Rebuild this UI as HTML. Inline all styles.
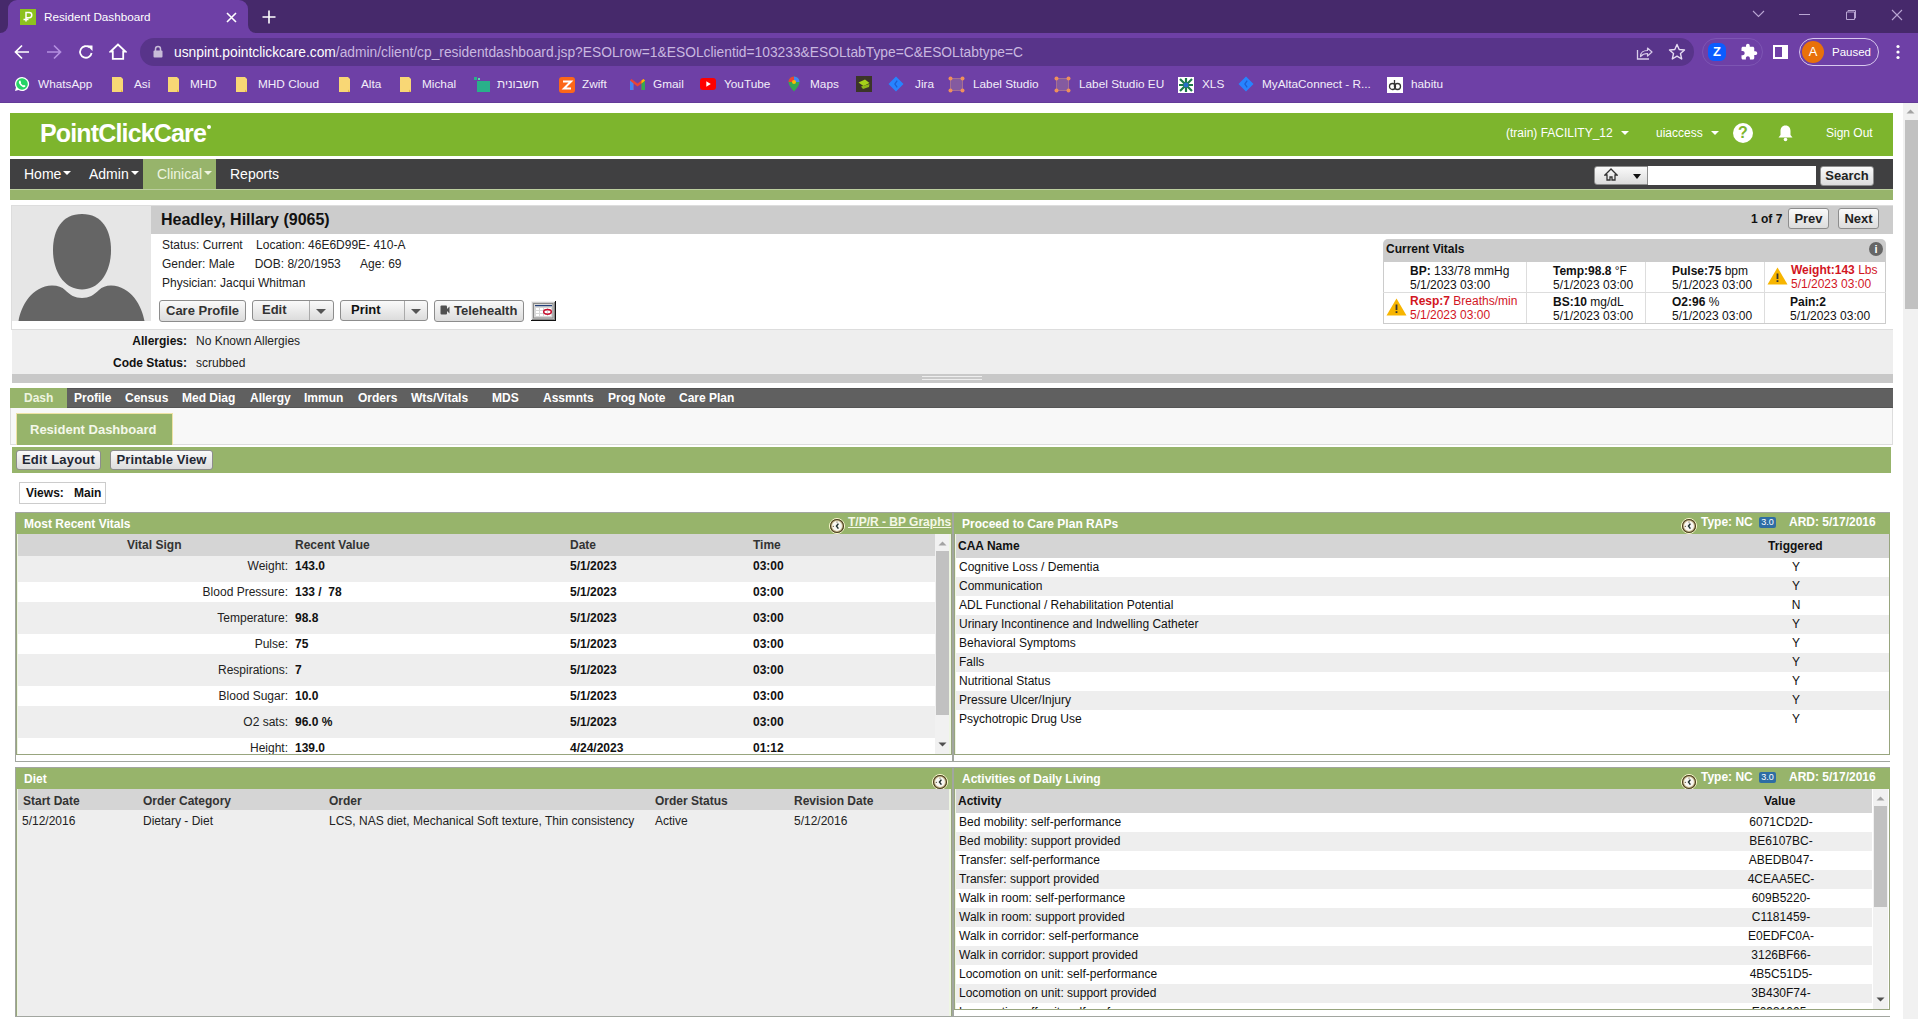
<!DOCTYPE html>
<html><head><meta charset="utf-8">
<style>
*{box-sizing:border-box;margin:0;padding:0}
html,body{width:1918px;height:1019px;overflow:hidden;background:#fff;font-family:"Liberation Sans",sans-serif;font-size:12px;color:#222}
.a{position:absolute}
.nw{white-space:nowrap}
/* chrome */
#tabstrip{left:0;top:0;width:1918px;height:34px;background:#46296b}
#tab{left:8px;top:0;width:240px;height:34px;background:#6e40a6;border-radius:9px 9px 0 0}
#toolbar{left:0;top:33px;width:1918px;height:70px;background:#6e40a6;border-bottom:1px solid #633b98}
.bm{font-size:11.8px;color:#f3eefa;top:77px;line-height:14px}
.url{left:140px;top:38px;width:1554px;height:28px;border-radius:14px;background:#58348a}
/* pcc */
#hdr{left:10px;top:113px;width:1883px;height:43px;background:#7db52d}
#nav{left:10px;top:159px;width:1883px;height:30px;background:#404041}
#strip{left:10px;top:189px;width:1883px;height:11px;background:#97b46b}
.navi{top:166px;font-size:14px;color:#fff;line-height:16px}
.caret{display:inline-block;width:0;height:0;border-left:4px solid transparent;border-right:4px solid transparent;border-top:4px solid #fff;vertical-align:middle;margin-left:2px;position:relative;top:-2px}
.btn{background:linear-gradient(#fafafa,#dcdcdc);border:1px solid #8d8d8d;border-radius:3px;color:#222;font-weight:bold;font-size:13px;line-height:18px;text-align:center}
.tabt{top:391px;font-size:12px;font-weight:bold;color:#fff;line-height:15px}
.ph{background:#97b46b}
.pht{font-weight:bold;color:#fff;font-size:12px;line-height:14px}
.th{background:#d5d5d5;font-weight:bold;color:#333}
.g{background:#eee}
.t12{font-size:12px;line-height:14px}
.b{font-weight:bold}
.red{color:#d8262e}
</style></head><body>
<!-- ============ CHROME ============ -->
<div id="tabstrip" class="a"></div>
<div id="tab" class="a"></div><div class="a" style="left:0;top:24px;width:8px;height:10px;background:#6e40a6"></div><div class="a" style="left:-10px;top:0;width:18px;height:33px;background:#46296b;border-radius:0 0 8px 0"></div><div class="a" style="left:248px;top:24px;width:8px;height:10px;background:#6e40a6"></div><div class="a" style="left:248px;top:0;width:18px;height:33px;background:#46296b;border-radius:0 0 0 8px"></div>
<div id="toolbar" class="a"></div>

<div class="a" style="left:20px;top:9px;width:16px;height:16px;background:#8dc21f"></div>
<svg class="a" style="left:20px;top:9px" width="16" height="16" viewBox="0 0 16 16"><path d="M6 12.5V3.5h3.2a2.6 2.6 0 0 1 0 5.2H6M3.5 10.5h5" stroke="#fff" stroke-width="1.5" fill="none"/></svg>
<div class="a nw" style="left:44px;top:9px;font-size:11.7px;color:#fff;line-height:16px">Resident Dashboard</div>
<svg class="a" style="left:226px;top:12px" width="11" height="11" viewBox="0 0 11 11"><path d="M1 1L10 10M10 1L1 10" stroke="#fff" stroke-width="1.6"/></svg>
<svg class="a" style="left:262px;top:10px" width="14" height="14" viewBox="0 0 14 14"><path d="M7 0.5V13.5M0.5 7H13.5" stroke="#fff" stroke-width="1.6"/></svg>
<!-- window controls -->
<svg class="a" style="left:1752px;top:10px" width="13" height="8" viewBox="0 0 13 8"><path d="M1 1L6.5 6.5L12 1" stroke="#b9a6d3" stroke-width="1.1" fill="none"/></svg>
<div class="a" style="left:1799px;top:14px;width:11px;height:1px;background:#b9a6d3"></div>
<svg class="a" style="left:1845px;top:9px" width="12" height="12" viewBox="0 0 12 12"><path d="M3 2.5V1.5h7.5V9H9.5M1.5 3h8v7.5h-8z" stroke="#b9a6d3" stroke-width="1" fill="none"/></svg>
<svg class="a" style="left:1891px;top:9px" width="12" height="12" viewBox="0 0 12 12"><path d="M1 1L11 11M11 1L1 11" stroke="#b9a6d3" stroke-width="1.1"/></svg>
<!-- toolbar -->
<svg class="a" style="left:14px;top:44px" width="16" height="16" viewBox="0 0 16 16"><path d="M15 8H2M8 1.5L1.5 8L8 14.5" stroke="#fff" stroke-width="1.7" fill="none"/></svg>
<svg class="a" style="left:46px;top:44px" width="16" height="16" viewBox="0 0 16 16"><path d="M1 8H14M8 1.5L14.5 8L8 14.5" stroke="#b48fe0" stroke-width="1.7" fill="none"/></svg>
<svg class="a" style="left:78px;top:44px" width="16" height="16" viewBox="0 0 16 16"><path d="M13.6 9A5.8 5.8 0 1 1 11.5 3.4" stroke="#fff" stroke-width="1.8" fill="none"/><path d="M9 1.5H14.5V7z" fill="#fff"/></svg>
<svg class="a" style="left:109px;top:43px" width="18" height="17" viewBox="0 0 18 17"><path d="M9 1.5L1.5 8.5H3.8V15.8H14.2V8.5H16.5Z" stroke="#fff" stroke-width="1.8" fill="none" stroke-linejoin="miter"/></svg>
<div class="a url"></div>
<svg class="a" style="left:153px;top:45px" width="10" height="13" viewBox="0 0 10 13"><path d="M2.5 6V4a2.5 2.5 0 0 1 5 0v2" stroke="#c8bcd8" stroke-width="1.5" fill="none"/><rect x="0.5" y="5.5" width="9" height="7" rx="1" fill="#c8bcd8"/></svg>
<div class="a nw" style="left:174px;top:45px;font-size:13.8px;line-height:16px;color:#fff">usnpint.pointclickcare.com<span style="color:#c9b8e0">/admin/client/cp_residentdashboard.jsp?ESOLrow=1&amp;ESOLclientid=103233&amp;ESOLtabType=C&amp;ESOLtabtype=C</span></div>
<svg class="a" style="left:1636px;top:44px" width="18" height="16" viewBox="0 0 18 16"><path d="M1.5 6V15H13" stroke="#d9cdea" stroke-width="1.3" fill="none"/><path d="M4.5 12.5C4.5 8.5 7.5 6.5 11.5 6.5V4L16 8L11.5 12V9.5C8.5 9.5 6.2 10.5 4.5 12.5Z" stroke="#d9cdea" stroke-width="1.2" fill="none" stroke-linejoin="round"/></svg>
<svg class="a" style="left:1668px;top:43px" width="18" height="18" viewBox="0 0 18 18"><path d="M9 1.5L11.2 6.5L16.5 7L12.5 10.6L13.7 16L9 13.2L4.3 16L5.5 10.6L1.5 7L6.8 6.5Z" stroke="#e6dcf2" stroke-width="1.4" fill="none" stroke-linejoin="round"/></svg>
<div class="a" style="left:1702px;top:38px;width:61px;height:28px;border-radius:14px;border:1px solid #7d55b3"></div>
<div class="a" style="left:1708px;top:43px;width:18px;height:18px;border-radius:6px;background:#0b5cff;color:#fff;font-weight:bold;font-size:13px;line-height:18px;text-align:center">Z</div>
<svg class="a" style="left:1740px;top:43px" width="18" height="18" viewBox="0 0 18 18"><path transform="scale(0.75)" d="M20.5 11H19V7c0-1.1-.9-2-2-2h-4V3.5C13 2.12 11.88 1 10.5 1S8 2.12 8 3.5V5H4c-1.1 0-1.99.9-1.99 2v3.8H3.5c1.49 0 2.7 1.21 2.7 2.7s-1.21 2.7-2.7 2.7H2V20c0 1.1.9 2 2 2h3.8v-1.5c0-1.49 1.21-2.7 2.7-2.7 1.49 0 2.7 1.21 2.7 2.7V22H17c1.1 0 2-.9 2-2v-4h1.5c1.38 0 2.5-1.12 2.5-2.5S21.880 11 20.5 11z" fill="#fff"/></svg>
<div class="a" style="left:1773px;top:45px;width:15px;height:14px;border:2px solid #fff;border-right-width:6px"></div>
<div class="a" style="left:1799px;top:38px;width:80px;height:28px;border-radius:14px;border:1px solid #d8c8ee"></div>
<div class="a" style="left:1802px;top:41px;width:22px;height:22px;border-radius:11px;background:#e8710a;color:#fff;font-size:13px;line-height:22px;text-align:center">A</div>
<div class="a nw" style="left:1832px;top:45px;font-size:11.5px;line-height:14px;color:#fff">Paused</div>
<svg class="a" style="left:1895px;top:44px" width="6" height="16" viewBox="0 0 6 16"><circle cx="3" cy="2.5" r="1.6" fill="#fff"/><circle cx="3" cy="8" r="1.6" fill="#fff"/><circle cx="3" cy="13.5" r="1.6" fill="#fff"/></svg>
<!-- bookmarks -->
<svg class="a" style="left:14px;top:76px" width="16" height="16" viewBox="0 0 16 16"><path d="M8 1a7 7 0 0 0-6 10.6L1 15l3.5-1A7 7 0 1 0 8 1z" fill="#fff"/><circle cx="8" cy="8" r="5.8" fill="#25d366"/><path d="M5.5 4.8c.4-.3.8-.3 1 .1l.6 1.3c.1.3-.2.6-.4.9.5 1 1.3 1.8 2.3 2.3.3-.2.6-.5.9-.4l1.3.6c.4.2.4.6.1 1-.7.8-1.8.8-3 .1-1.2-.7-2.3-1.8-3-3-.6-1.2-.6-2.2.2-2.9z" fill="#fff"/></svg>
<div class="a nw bm" style="left:38px">WhatsApp</div>
<svg class="a" style="left:112px;top:77px" width="12" height="15" viewBox="0 0 12 15"><path d="M0 0H9L11 2V15H0Z" fill="#f8d775"/><path d="M9 12.5L11 15H9z" fill="#e0b440"/></svg><div class="a nw bm" style="left:134px">Asi</div>
<svg class="a" style="left:168px;top:77px" width="12" height="15" viewBox="0 0 12 15"><path d="M0 0H9L11 2V15H0Z" fill="#f8d775"/><path d="M9 12.5L11 15H9z" fill="#e0b440"/></svg><div class="a nw bm" style="left:190px">MHD</div>
<svg class="a" style="left:236px;top:77px" width="12" height="15" viewBox="0 0 12 15"><path d="M0 0H9L11 2V15H0Z" fill="#f8d775"/><path d="M9 12.5L11 15H9z" fill="#e0b440"/></svg><div class="a nw bm" style="left:258px">MHD Cloud</div>
<svg class="a" style="left:339px;top:77px" width="12" height="15" viewBox="0 0 12 15"><path d="M0 0H9L11 2V15H0Z" fill="#f8d775"/><path d="M9 12.5L11 15H9z" fill="#e0b440"/></svg><div class="a nw bm" style="left:361px">Alta</div>
<svg class="a" style="left:400px;top:77px" width="12" height="15" viewBox="0 0 12 15"><path d="M0 0H9L11 2V15H0Z" fill="#f8d775"/><path d="M9 12.5L11 15H9z" fill="#e0b440"/></svg><div class="a nw bm" style="left:422px">Michal</div>

<div class="a" style="left:474px;top:77px;width:16px;height:15px"><div class="a" style="left:3px;top:4px;width:13px;height:11px;background:#29b08a"></div><div class="a" style="left:0;top:0;width:3px;height:3px;background:#29b08a"></div><div class="a" style="left:4px;top:1px;width:2px;height:2px;background:#5fd5b0"></div></div>
<div class="a nw bm" style="left:497px">חשבונית</div>
<div class="a" style="left:559px;top:77px;width:16px;height:16px;border-radius:3px;background:#fc6719"></div>
<svg class="a" style="left:559px;top:77px" width="16" height="16" viewBox="0 0 16 16"><path d="M4 4.5H12L5 11.5H12" stroke="#fff" stroke-width="2" fill="none"/></svg>
<div class="a nw bm" style="left:582px">Zwift</div>
<svg class="a" style="left:630px;top:79px" width="15" height="11" viewBox="0 0 15 11"><path d="M0 1.5V11H3.5V4.5L7.5 7.5L11.5 4.5V11H15V1.5L13.5 0L7.5 4.5L1.5 0Z" fill="#ea4335"/><path d="M0 1.5V11H3.5V4.5Z" fill="#4285f4"/><path d="M15 1.5V11H11.5V4.5Z" fill="#34a853"/><path d="M11.5 4.5L15 1.5L13.5 0L11.5 1.5Z" fill="#fbbc04"/></svg>
<div class="a nw bm" style="left:653px">Gmail</div>
<div class="a" style="left:700px;top:78px;width:16px;height:12px;border-radius:3px;background:#f00"></div>
<svg class="a" style="left:700px;top:78px" width="16" height="12" viewBox="0 0 16 12"><path d="M6.3 3.3V8.7L10.8 6Z" fill="#fff"/></svg>
<div class="a nw bm" style="left:724px">YouTube</div>
<svg class="a" style="left:788px;top:76px" width="12" height="16" viewBox="0 0 12 16"><path d="M6 0.5A5.5 5.5 0 0 0 0.5 6C0.5 10 6 15.5 6 15.5S11.5 10 11.5 6A5.5 5.5 0 0 0 6 0.5Z" fill="#34a853"/><path d="M6 0.5A5.5 5.5 0 0 1 11.5 6L6 6Z" fill="#4285f4"/><path d="M0.5 6A5.5 5.5 0 0 1 6 0.5L6 6Z" fill="#ea4335"/><circle cx="6" cy="6" r="2" fill="#fbbc04"/></svg>
<div class="a nw bm" style="left:810px">Maps</div>
<div class="a" style="left:856px;top:76px;width:16px;height:16px;background:#3b3528"></div>
<svg class="a" style="left:856px;top:76px" width="16" height="16" viewBox="0 0 16 16"><path d="M2.5 6.5L9 3.5L13.5 7L7.5 10Z" fill="#a6d21a"/><path d="M5 10.5L13.5 8L13 11L7 13Z" fill="#8fb818"/></svg>
<svg class="a" style="left:888px;top:76px" width="16" height="16" viewBox="0 0 16 16"><path d="M8 0.5L15.5 8L8 15.5L0.5 8Z" fill="#2684ff"/><path d="M9.2 4.6L6.9 8L9.2 11.4" stroke="#1d5fd0" stroke-width="1.3" fill="none"/></svg>
<div class="a nw bm" style="left:915px">Jira</div>
<svg class="a" style="left:948px;top:76px" width="17" height="17" viewBox="0 0 17 17"><rect x="2.5" y="2.5" width="12" height="12" fill="#845aa0" stroke="#b07890" stroke-width="0.8"/><circle cx="2.5" cy="2.5" r="2" fill="#f0905a"/><circle cx="14.5" cy="2.5" r="2" fill="#f0905a"/><circle cx="2.5" cy="14.5" r="2" fill="#f0905a"/><circle cx="14.5" cy="14.5" r="2" fill="#f0905a"/></svg>
<div class="a nw bm" style="left:973px">Label Studio</div>
<svg class="a" style="left:1054px;top:76px" width="17" height="17" viewBox="0 0 17 17"><rect x="2.5" y="2.5" width="12" height="12" fill="#845aa0" stroke="#b07890" stroke-width="0.8"/><circle cx="2.5" cy="2.5" r="2" fill="#f0905a"/><circle cx="14.5" cy="2.5" r="2" fill="#f0905a"/><circle cx="2.5" cy="14.5" r="2" fill="#f0905a"/><circle cx="14.5" cy="14.5" r="2" fill="#f0905a"/></svg>
<div class="a nw bm" style="left:1079px">Label Studio EU</div>
<div class="a" style="left:1178px;top:77px;width:16px;height:16px;background:#fff"></div>
<svg class="a" style="left:1178px;top:77px" width="16" height="16" viewBox="0 0 16 16"><path d="M2 2L14 14M14 2L2 14M8 1V15M1 8H15" stroke="#1d7a4a" stroke-width="2.2"/><circle cx="8" cy="8" r="2.5" fill="#2a6fc9"/></svg>
<div class="a nw bm" style="left:1202px">XLS</div>
<svg class="a" style="left:1238px;top:76px" width="16" height="16" viewBox="0 0 16 16"><path d="M8 0.5L15.5 8L8 15.5L0.5 8Z" fill="#2684ff"/><path d="M9.2 4.6L6.9 8L9.2 11.4" stroke="#1d5fd0" stroke-width="1.3" fill="none"/></svg>
<div class="a nw bm" style="left:1262px">MyAltaConnect - R...</div>
<div class="a" style="left:1387px;top:77px;width:16px;height:16px;background:#fff"></div>
<svg class="a" style="left:1387px;top:77px" width="16" height="16" viewBox="0 0 16 16"><circle cx="5.5" cy="9.5" r="3" stroke="#333" stroke-width="1.3" fill="none"/><circle cx="10.5" cy="9.5" r="3" stroke="#333" stroke-width="1.3" fill="none"/><path d="M7.5 9.5V3" stroke="#333" stroke-width="1.3"/></svg>
<div class="a nw bm" style="left:1411px">habitu</div>

<div class="a" style="left:0;top:103px;width:1903px;height:916px;background:#fff"></div>
<div class="a" style="left:1903px;top:103px;width:15px;height:916px;background:#f1f1f1"></div>
<div class="a" style="left:1905px;top:120px;width:13px;height:189px;background:#c1c1c1"></div>
<svg class="a" style="left:1905px;top:107px" width="11" height="8" viewBox="0 0 11 8"><path d="M1.5 6.5L5.5 2.5L9.5 6.5z" fill="#a3a3a3"/></svg>
<div id="hdr" class="a"></div>
<div class="a nw" style="left:40px;top:118px;font-size:25px;line-height:30px;font-weight:bold;color:#fff;letter-spacing:-0.85px">PointClickCare</div>
<div class="a" style="left:207px;top:125px;width:4px;height:4px;border-radius:2px;background:#fff"></div>
<div class="a nw" style="left:1506px;top:126px;font-size:12px;line-height:15px;color:#fff">(train) FACILITY_12</div>
<div class="a" style="left:1621px;top:131px;border-left:4px solid transparent;border-right:4px solid transparent;border-top:4px solid #fff"></div>
<div class="a nw" style="left:1656px;top:126px;font-size:12px;line-height:15px;color:#fff">uiaccess</div>
<div class="a" style="left:1711px;top:131px;border-left:4px solid transparent;border-right:4px solid transparent;border-top:4px solid #fff"></div>
<div class="a" style="left:1733px;top:123px;width:20px;height:20px;border-radius:10px;background:#fff;color:#7db52d;font-weight:bold;font-size:16px;line-height:20px;text-align:center">?</div>
<svg class="a" style="left:1777px;top:124px" width="17" height="18" viewBox="0 0 17 18"><path d="M8.5 1.5C5 1.5 3.5 4 3.5 7V11L1.5 13.5H15.5L13.5 11V7C13.5 4 12 1.5 8.5 1.5Z" fill="#fff"/><circle cx="8.5" cy="15.5" r="1.8" fill="#fff"/></svg>
<div class="a nw" style="left:1826px;top:126px;font-size:12px;line-height:15px;color:#fff">Sign Out</div>
<div id="nav" class="a"></div>
<div class="a" style="left:143px;top:159px;width:73px;height:30px;background:#97b46b"></div>
<div class="a nw navi" style="left:24px;color:#fff">Home<span class="caret" style="border-top-color:#fff"></span></div>
<div class="a nw navi" style="left:89px;color:#fff">Admin<span class="caret" style="border-top-color:#fff"></span></div>
<div class="a nw navi" style="left:157px;color:#eef4e0">Clinical<span class="caret" style="border-top-color:#eef4e0"></span></div>
<div class="a nw navi" style="left:230px">Reports</div>
<div class="a btn" style="left:1594px;top:166px;width:54px;height:19px;border-radius:3px 0 0 3px"></div>
<svg class="a" style="left:1604px;top:168px" width="14" height="13" viewBox="0 0 14 13"><path d="M7 1L1 7H3V12H6V9H8V12H11V7H13Z" fill="none" stroke="#333" stroke-width="1.3"/></svg>
<div class="a" style="left:1633px;top:174px;border-left:4px solid transparent;border-right:4px solid transparent;border-top:5px solid #111"></div>
<div class="a" style="left:1648px;top:166px;width:168px;height:19px;background:#fff"></div>
<div class="a btn" style="left:1820px;top:166px;width:54px;height:20px;font-size:13px;line-height:18px">Search</div>
<div id="strip" class="a"></div>
<div class="a" style="left:10px;top:189px;width:1883px;height:1px;background:#bccf9f"></div>
<div class="a" style="left:11px;top:205px;width:1882px;height:125px;background:#fff;border-left:1px solid #ddd;border-top:1px solid #ddd;border-bottom:1px solid #ddd"></div>
<div class="a" style="left:12px;top:206px;width:139px;height:115px;background:#e6e6e6"></div>
<svg class="a" style="left:12px;top:206px" width="139" height="115" viewBox="0 0 139 115"><path d="M6.5 115C9 100 20 80 40 79.5C46 79.5 50 81 53 84C58 89 63 92 70 92C77 92 82 89 87 84C90 81 94 79.5 99 79.5C119 80 130 100 132.5 115Z" fill="#656565"/><path d="M70 8C90 8 99 24 99 44C99 68 86 83.5 70 83.5C54 83.5 41 68 41 44C41 24 50 8 70 8Z" fill="#656565"/></svg>
<div class="a" style="left:151px;top:206px;width:1742px;height:28px;background:#ccc"></div>
<div class="a nw" style="left:161px;top:210px;font-size:16px;line-height:20px;font-weight:bold;color:#111">Headley, Hillary (9065)</div>
<div class="a nw" style="left:1751px;top:212px;font-size:12px;line-height:14px;font-weight:bold;color:#111">1 of 7</div>
<div class="a btn" style="left:1788px;top:208px;width:41px;height:21px;font-size:13px;line-height:19px">Prev</div>
<div class="a btn" style="left:1838px;top:208px;width:41px;height:21px;font-size:13px;line-height:19px">Next</div>
<div class="a nw t12" style="left:162px;top:238px;color:#222">Status: Current&nbsp;&nbsp;&nbsp; Location: 46E6D99E- 410-A</div>
<div class="a nw t12" style="left:162px;top:257px;color:#222">Gender: Male&nbsp;&nbsp;&nbsp;&nbsp;&nbsp; DOB: 8/20/1953&nbsp;&nbsp;&nbsp;&nbsp;&nbsp; Age: 69</div>
<div class="a nw t12" style="left:162px;top:276px;color:#222">Physician: Jacqui Whitman</div>
<div class="a btn" style="left:159px;top:300px;width:87px;height:22px;line-height:20px;font-size:13px;color:#333">Care Profile</div>
<div class="a btn" style="left:252px;top:300px;width:82px;height:21px"></div>
<div class="a nw" style="left:262px;top:302px;font-weight:bold;font-size:13px;line-height:16px;color:#333">Edit</div>
<div class="a" style="left:309px;top:301px;width:1px;height:19px;background:#aaa"></div>
<div class="a" style="left:316px;top:309px;border-left:5px solid transparent;border-right:5px solid transparent;border-top:5px solid #555"></div>
<div class="a btn" style="left:340px;top:300px;width:88px;height:21px"></div>
<div class="a nw" style="left:351px;top:302px;font-weight:bold;font-size:13px;line-height:16px;color:#111">Print</div>
<div class="a" style="left:404px;top:301px;width:1px;height:19px;background:#aaa"></div>
<div class="a" style="left:411px;top:309px;border-left:5px solid transparent;border-right:5px solid transparent;border-top:5px solid #555"></div>
<div class="a btn" style="left:434px;top:300px;width:90px;height:22px"></div>
<svg class="a" style="left:440px;top:305px" width="10" height="10" viewBox="0 0 10 10"><rect x="0.5" y="0.5" width="6.5" height="9" rx="1" fill="#505050"/><path d="M6 5L9.5 1.5V8.5z" fill="#505050"/></svg>
<div class="a nw" style="left:454px;top:303px;font-weight:bold;font-size:13px;line-height:16px;color:#333">Telehealth</div>
<svg class="a" style="left:531px;top:301px" width="25" height="20" viewBox="0 0 25 20"><rect x="0" y="0" width="25" height="20" fill="#cdcdcd"/><rect x="0" y="0" width="24" height="1" fill="#f2f2f2"/><rect x="0" y="0" width="1" height="19" fill="#f2f2f2"/><rect x="24" y="0" width="1" height="20" fill="#111"/><rect x="0" y="19" width="25" height="1" fill="#111"/><rect x="23" y="1" width="1" height="18" fill="#888"/><rect x="1" y="18" width="23" height="1" fill="#888"/><rect x="2.5" y="2.5" width="19.5" height="14.5" fill="#d8d8d8" stroke="#8a8a8a"/><rect x="4" y="4" width="17" height="1.2" fill="#23407a"/><rect x="5" y="7" width="3" height="2" fill="#fff"/><rect x="5" y="10" width="3" height="2" fill="#fff"/><rect x="5" y="13" width="3" height="2" fill="#fff"/><rect x="9" y="7" width="3" height="2" fill="#fff"/><rect x="9" y="10" width="3" height="2" fill="#fff"/><rect x="9" y="13" width="3" height="2" fill="#fff"/><rect x="13" y="7" width="3" height="2" fill="#fff"/><rect x="13" y="10" width="3" height="2" fill="#fff"/><rect x="13" y="13" width="3" height="2" fill="#fff"/><rect x="17" y="7" width="3" height="2" fill="#fff"/><rect x="17" y="10" width="3" height="2" fill="#fff"/><rect x="17" y="13" width="3" height="2" fill="#fff"/><ellipse cx="16.5" cy="10.8" rx="3.8" ry="2.4" fill="none" stroke="#c8102e" stroke-width="1.5"/></svg>
<div class="a" style="left:1383px;top:239px;width:503px;height:23px;background:#ccc;border-radius:5px 5px 0 0"></div>
<div class="a nw" style="left:1386px;top:242px;font-size:12px;line-height:14px;font-weight:bold;color:#111">Current Vitals</div>
<div class="a" style="left:1869px;top:242px;width:14px;height:14px;border-radius:7px;background:#666;color:#fff;font-size:11px;line-height:14px;text-align:center;font-weight:bold">i</div>
<div class="a" style="left:1383px;top:261px;width:503px;height:63px;border:1px solid #ccc;background:#fff"></div>
<div class="a" style="left:1383px;top:292px;width:503px;height:1px;background:#ddd"></div>
<div class="a" style="left:1526px;top:262px;width:1px;height:61px;background:#ddd"></div>
<div class="a" style="left:1645px;top:262px;width:1px;height:61px;background:#ddd"></div>
<div class="a" style="left:1764px;top:262px;width:1px;height:61px;background:#ddd"></div>
<div class="a nw" style="left:1410px;top:265px;font-size:12px;line-height:13.5px;color:#111"><b>BP:</b> 133/78 mmHg<br>5/1/2023 03:00</div>
<div class="a nw" style="left:1553px;top:265px;font-size:12px;line-height:13.5px;color:#111"><b>Temp:98.8</b> °F<br>5/1/2023 03:00</div>
<div class="a nw" style="left:1672px;top:265px;font-size:12px;line-height:13.5px;color:#111"><b>Pulse:75</b> bpm<br>5/1/2023 03:00</div>
<div class="a nw" style="left:1791px;top:264px;font-size:12px;line-height:13.5px;color:#d2161f"><b>Weight:143</b> Lbs<br>5/1/2023 03:00</div>
<div class="a nw" style="left:1410px;top:295px;font-size:12px;line-height:13.5px;color:#d2161f"><b>Resp:7</b> Breaths/min<br>5/1/2023 03:00</div>
<div class="a nw" style="left:1553px;top:296px;font-size:12px;line-height:13.5px;color:#111"><b>BS:10</b> mg/dL<br>5/1/2023 03:00</div>
<div class="a nw" style="left:1672px;top:296px;font-size:12px;line-height:13.5px;color:#111"><b>O2:96</b> %<br>5/1/2023 03:00</div>
<div class="a nw" style="left:1790px;top:296px;font-size:12px;line-height:13.5px;color:#111"><b>Pain:2</b><br>5/1/2023 03:00</div>
<svg class="a" style="left:1386px;top:298px" width="21" height="18" viewBox="0 0 21 18"><path d="M10.5 0.5L20.5 17.5H0.5Z" fill="#f7b500"/><rect x="9.6" y="6.5" width="1.8" height="5.5" fill="#333"/><rect x="9.6" y="13.2" width="1.8" height="1.8" fill="#333"/></svg>
<svg class="a" style="left:1767px;top:267px" width="21" height="18" viewBox="0 0 21 18"><path d="M10.5 0.5L20.5 17.5H0.5Z" fill="#f7b500"/><rect x="9.6" y="6.5" width="1.8" height="5.5" fill="#333"/><rect x="9.6" y="13.2" width="1.8" height="1.8" fill="#333"/></svg>
<div class="a" style="left:12px;top:330px;width:1881px;height:44px;background:#eee"></div>
<div class="a nw t12 b" style="left:0;top:334px;width:187px;text-align:right;color:#111">Allergies:</div>
<div class="a nw t12" style="left:196px;top:334px;color:#222">No Known Allergies</div>
<div class="a nw t12 b" style="left:0;top:356px;width:187px;text-align:right;color:#111">Code Status:</div>
<div class="a nw t12" style="left:196px;top:356px;color:#222">scrubbed</div>
<div class="a" style="left:12px;top:374px;width:1881px;height:9px;background:#c8c8c8"></div>
<div class="a" style="left:922px;top:376px;width:60px;height:1px;background:#eee"></div>
<div class="a" style="left:922px;top:379px;width:60px;height:1px;background:#eee"></div>
<div class="a" style="left:10px;top:388px;width:1883px;height:20px;background:#606060;border-top:1px solid #555;border-bottom:1px solid #555"></div>
<div class="a" style="left:10px;top:388px;width:57px;height:20px;background:#97b46b"></div>
<div class="a nw tabt" style="left:24px;color:#eef4e0">Dash</div>
<div class="a nw tabt" style="left:74px;color:#fff">Profile</div>
<div class="a nw tabt" style="left:125px;color:#fff">Census</div>
<div class="a nw tabt" style="left:182px;color:#fff">Med Diag</div>
<div class="a nw tabt" style="left:250px;color:#fff">Allergy</div>
<div class="a nw tabt" style="left:304px;color:#fff">Immun</div>
<div class="a nw tabt" style="left:358px;color:#fff">Orders</div>
<div class="a nw tabt" style="left:411px;color:#fff">Wts/Vitals</div>
<div class="a nw tabt" style="left:492px;color:#fff">MDS</div>
<div class="a nw tabt" style="left:543px;color:#fff">Assmnts</div>
<div class="a nw tabt" style="left:608px;color:#fff">Prog Note</div>
<div class="a nw tabt" style="left:679px;color:#fff">Care Plan</div>
<div class="a" style="left:10px;top:408px;width:1883px;height:37px;background:#f8f8f8;border:1px solid #ddd;border-top:0"></div>
<div class="a" style="left:16px;top:413px;width:157px;height:32px;background:#97b46b;border:1px solid #efe3a6;border-bottom:0"></div>
<div class="a nw" style="left:30px;top:422px;font-size:13px;line-height:15px;font-weight:bold;color:#f4f8ea">Resident Dashboard</div>
<div class="a" style="left:12px;top:447px;width:1879px;height:26px;background:#97b46b"></div>
<div class="a btn" style="left:16px;top:450px;width:85px;height:20px;font-size:13px;line-height:18px;color:#1f2733;letter-spacing:0.2px">Edit Layout</div>
<div class="a btn" style="left:110px;top:450px;width:103px;height:20px;font-size:13px;line-height:18px;color:#1f2733;letter-spacing:0.1px">Printable View</div>
<div class="a" style="left:19px;top:482px;width:87px;height:22px;border:1px solid #ccc;background:#fff"></div>
<div class="a nw t12 b" style="left:26px;top:486px;color:#111">Views:</div>
<div class="a nw t12 b" style="left:74px;top:486px;color:#111">Main</div>
<div class="a" style="left:15px;top:512px;width:1875px;height:1px;background:#a2a6a0;"></div>
<div class="a" style="left:15px;top:761px;width:1875px;height:1px;background:#a2a6a0;"></div>
<div class="a" style="left:15px;top:512px;width:1px;height:250px;background:#a2a6a0;"></div>
<div class="a" style="left:952px;top:512px;width:2px;height:250px;background:#a2a6a0;"></div>
<div class="a" style="left:16px;top:513px;width:936px;height:21px;background:#97b46b;"></div>
<div class="a" style="left:954px;top:513px;width:936px;height:21px;background:#97b46b;"></div>
<div class="a nw pht" style="left:24px;top:517px">Most Recent Vitals</div>
<svg class="a" style="left:829px;top:518px" width="16" height="16" viewBox="0 0 16 16"><circle cx="8" cy="8" r="7.5" fill="none" stroke="#fffbd2" stroke-width="1"/><circle cx="8" cy="8" r="6.5" fill="#c9b98f" stroke="#4a3c20" stroke-width="1.1"/><circle cx="8" cy="8" r="4.9" fill="#f8f7f2"/><path d="M9.4 5.6L7.5 8.1L9.4 10.6" stroke="#1f2f30" stroke-width="1.5" fill="none"/><circle cx="8" cy="4" r="0.6" fill="#4a3c20"/><circle cx="4.3" cy="8.3" r="0.6" fill="#4a3c20"/></svg>
<div class="a nw" style="left:848px;top:515px;font-size:12px;line-height:14px;font-weight:bold;color:#f4f8e6;text-decoration:underline">T/P/R - BP Graphs</div>
<div class="a" style="left:18px;top:556px;width:917px;height:198px;background:#fff;overflow:hidden"><div class="a" style="left:0;top:-6px;width:917px;height:32px;background:#eee"></div><div class="a" style="left:0;top:46px;width:917px;height:32px;background:#eee"></div><div class="a" style="left:0;top:98px;width:917px;height:32px;background:#eee"></div><div class="a" style="left:0;top:150px;width:917px;height:32px;background:#eee"></div></div>
<div class="a" style="left:18px;top:534px;width:917px;height:22px;background:#d5d5d5;"></div>
<div class="a nw t12 b" style="left:127px;top:538px;color:#333">Vital Sign</div>
<div class="a nw t12 b" style="left:295px;top:538px;color:#333">Recent Value</div>
<div class="a nw t12 b" style="left:570px;top:538px;color:#333">Date</div>
<div class="a nw t12 b" style="left:753px;top:538px;color:#333">Time</div>
<div class="a nw t12" style="left:0;top:559px;width:288px;text-align:right;color:#222">Weight:</div>
<div class="a nw t12 b" style="left:295px;top:559px;color:#111">143.0</div>
<div class="a nw t12 b" style="left:570px;top:559px;color:#111">5/1/2023</div>
<div class="a nw t12 b" style="left:753px;top:559px;color:#111">03:00</div>
<div class="a nw t12" style="left:0;top:585px;width:288px;text-align:right;color:#222">Blood Pressure:</div>
<div class="a nw t12 b" style="left:295px;top:585px;color:#111">133 /&nbsp; 78</div>
<div class="a nw t12 b" style="left:570px;top:585px;color:#111">5/1/2023</div>
<div class="a nw t12 b" style="left:753px;top:585px;color:#111">03:00</div>
<div class="a nw t12" style="left:0;top:611px;width:288px;text-align:right;color:#222">Temperature:</div>
<div class="a nw t12 b" style="left:295px;top:611px;color:#111">98.8</div>
<div class="a nw t12 b" style="left:570px;top:611px;color:#111">5/1/2023</div>
<div class="a nw t12 b" style="left:753px;top:611px;color:#111">03:00</div>
<div class="a nw t12" style="left:0;top:637px;width:288px;text-align:right;color:#222">Pulse:</div>
<div class="a nw t12 b" style="left:295px;top:637px;color:#111">75</div>
<div class="a nw t12 b" style="left:570px;top:637px;color:#111">5/1/2023</div>
<div class="a nw t12 b" style="left:753px;top:637px;color:#111">03:00</div>
<div class="a nw t12" style="left:0;top:663px;width:288px;text-align:right;color:#222">Respirations:</div>
<div class="a nw t12 b" style="left:295px;top:663px;color:#111">7</div>
<div class="a nw t12 b" style="left:570px;top:663px;color:#111">5/1/2023</div>
<div class="a nw t12 b" style="left:753px;top:663px;color:#111">03:00</div>
<div class="a nw t12" style="left:0;top:689px;width:288px;text-align:right;color:#222">Blood Sugar:</div>
<div class="a nw t12 b" style="left:295px;top:689px;color:#111">10.0</div>
<div class="a nw t12 b" style="left:570px;top:689px;color:#111">5/1/2023</div>
<div class="a nw t12 b" style="left:753px;top:689px;color:#111">03:00</div>
<div class="a nw t12" style="left:0;top:715px;width:288px;text-align:right;color:#222">O2 sats:</div>
<div class="a nw t12 b" style="left:295px;top:715px;color:#111">96.0 %</div>
<div class="a nw t12 b" style="left:570px;top:715px;color:#111">5/1/2023</div>
<div class="a nw t12 b" style="left:753px;top:715px;color:#111">03:00</div>
<div class="a nw t12" style="left:0;top:741px;width:288px;text-align:right;color:#222">Height:</div>
<div class="a nw t12 b" style="left:295px;top:741px;color:#111">139.0</div>
<div class="a nw t12 b" style="left:570px;top:741px;color:#111">4/24/2023</div>
<div class="a nw t12 b" style="left:753px;top:741px;color:#111">01:12</div>
<div class="a" style="left:935px;top:534px;width:15px;height:220px;background:#f1f1f1;"></div>
<div class="a" style="left:936px;top:551px;width:13px;height:164px;background:#c1c1c1;"></div>
<svg class="a" style="left:937px;top:539px" width="11" height="8" viewBox="0 0 11 8"><path d="M1.5 6.5L5.5 2.5L9.5 6.5z" fill="#a3a3a3"/></svg>
<svg class="a" style="left:937px;top:741px" width="11" height="8" viewBox="0 0 11 8"><path d="M1.5 1.5L5.5 5.5L9.5 1.5z" fill="#505050"/></svg>
<div class="a nw pht" style="left:962px;top:517px">Proceed to Care Plan RAPs</div>
<svg class="a" style="left:1681px;top:518px" width="16" height="16" viewBox="0 0 16 16"><circle cx="8" cy="8" r="7.5" fill="none" stroke="#fffbd2" stroke-width="1"/><circle cx="8" cy="8" r="6.5" fill="#c9b98f" stroke="#4a3c20" stroke-width="1.1"/><circle cx="8" cy="8" r="4.9" fill="#f8f7f2"/><path d="M9.4 5.6L7.5 8.1L9.4 10.6" stroke="#1f2f30" stroke-width="1.5" fill="none"/><circle cx="8" cy="4" r="0.6" fill="#4a3c20"/><circle cx="4.3" cy="8.3" r="0.6" fill="#4a3c20"/></svg>
<div class="a nw pht" style="left:1701px;top:515px">Type: NC</div>
<div class="a" style="left:1759px;top:517px;width:17px;height:11px;background:#2e6da4;border-radius:2px;color:#fff;font-size:9px;line-height:11px;text-align:center">3.0</div>
<div class="a nw pht" style="left:1789px;top:515px">ARD: 5/17/2016</div>
<div class="a" style="left:956px;top:534px;width:933px;height:220px;background:#fff;"></div>
<div class="a" style="left:956px;top:534px;width:933px;height:24px;background:#d5d5d5;"></div>
<div class="a nw t12 b" style="left:958px;top:539px;color:#111">CAA Name</div>
<div class="a nw t12 b" style="left:1768px;top:539px;color:#111">Triggered</div>
<div class="a nw t12" style="left:959px;top:560px;color:#111">Cognitive Loss / Dementia</div>
<div class="a nw t12" style="left:1746px;top:560px;width:100px;text-align:center;color:#111">Y</div>
<div class="a" style="left:956px;top:577px;width:933px;height:19px;background:#eee;"></div>
<div class="a nw t12" style="left:959px;top:579px;color:#111">Communication</div>
<div class="a nw t12" style="left:1746px;top:579px;width:100px;text-align:center;color:#111">Y</div>
<div class="a nw t12" style="left:959px;top:598px;color:#111">ADL Functional / Rehabilitation Potential</div>
<div class="a nw t12" style="left:1746px;top:598px;width:100px;text-align:center;color:#111">N</div>
<div class="a" style="left:956px;top:615px;width:933px;height:19px;background:#eee;"></div>
<div class="a nw t12" style="left:959px;top:617px;color:#111">Urinary Incontinence and Indwelling Catheter</div>
<div class="a nw t12" style="left:1746px;top:617px;width:100px;text-align:center;color:#111">Y</div>
<div class="a nw t12" style="left:959px;top:636px;color:#111">Behavioral Symptoms</div>
<div class="a nw t12" style="left:1746px;top:636px;width:100px;text-align:center;color:#111">Y</div>
<div class="a" style="left:956px;top:653px;width:933px;height:19px;background:#eee;"></div>
<div class="a nw t12" style="left:959px;top:655px;color:#111">Falls</div>
<div class="a nw t12" style="left:1746px;top:655px;width:100px;text-align:center;color:#111">Y</div>
<div class="a nw t12" style="left:959px;top:674px;color:#111">Nutritional Status</div>
<div class="a nw t12" style="left:1746px;top:674px;width:100px;text-align:center;color:#111">Y</div>
<div class="a" style="left:956px;top:691px;width:933px;height:19px;background:#eee;"></div>
<div class="a nw t12" style="left:959px;top:693px;color:#111">Pressure Ulcer/Injury</div>
<div class="a nw t12" style="left:1746px;top:693px;width:100px;text-align:center;color:#111">Y</div>
<div class="a nw t12" style="left:959px;top:712px;color:#111">Psychotropic Drug Use</div>
<div class="a nw t12" style="left:1746px;top:712px;width:100px;text-align:center;color:#111">Y</div>
<div class="a" style="left:16px;top:534px;width:1px;height:220px;background:#98a57e;"></div>
<div class="a" style="left:17px;top:534px;width:1px;height:220px;background:#eef6e2;"></div>
<div class="a" style="left:951px;top:534px;width:1px;height:220px;background:#98a57e;"></div>
<div class="a" style="left:949px;top:534px;width:2px;height:220px;background:#eef6e2;"></div>
<div class="a" style="left:954px;top:534px;width:1px;height:220px;background:#98a57e;"></div>
<div class="a" style="left:955px;top:534px;width:1px;height:220px;background:#eef6e2;"></div>
<div class="a" style="left:1889px;top:534px;width:1px;height:221px;background:#98a57e;"></div>
<div class="a" style="left:16px;top:754px;width:936px;height:1px;background:#98a57e;"></div>
<div class="a" style="left:954px;top:754px;width:936px;height:1px;background:#98a57e;"></div>
<div class="a" style="left:15px;top:767px;width:1875px;height:1px;background:#a2a6a0;"></div>
<div class="a" style="left:15px;top:1016px;width:1875px;height:1px;background:#a2a6a0;"></div>
<div class="a" style="left:15px;top:767px;width:1px;height:250px;background:#a2a6a0;"></div>
<div class="a" style="left:952px;top:767px;width:2px;height:250px;background:#a2a6a0;"></div>
<div class="a" style="left:16px;top:768px;width:936px;height:21px;background:#97b46b;"></div>
<div class="a" style="left:954px;top:768px;width:936px;height:21px;background:#97b46b;"></div>
<div class="a nw pht" style="left:24px;top:772px">Diet</div>
<svg class="a" style="left:932px;top:774px" width="16" height="16" viewBox="0 0 16 16"><circle cx="8" cy="8" r="7.5" fill="none" stroke="#fffbd2" stroke-width="1"/><circle cx="8" cy="8" r="6.5" fill="#c9b98f" stroke="#4a3c20" stroke-width="1.1"/><circle cx="8" cy="8" r="4.9" fill="#f8f7f2"/><path d="M9.4 5.6L7.5 8.1L9.4 10.6" stroke="#1f2f30" stroke-width="1.5" fill="none"/><circle cx="8" cy="4" r="0.6" fill="#4a3c20"/><circle cx="4.3" cy="8.3" r="0.6" fill="#4a3c20"/></svg>
<div class="a" style="left:18px;top:789px;width:931px;height:227px;background:#eee;"></div>
<div class="a" style="left:18px;top:789px;width:931px;height:21px;background:#d5d5d5;"></div>
<div class="a nw t12 b" style="left:23px;top:794px;color:#333">Start Date</div>
<div class="a nw t12 b" style="left:143px;top:794px;color:#333">Order Category</div>
<div class="a nw t12 b" style="left:329px;top:794px;color:#333">Order</div>
<div class="a nw t12 b" style="left:655px;top:794px;color:#333">Order Status</div>
<div class="a nw t12 b" style="left:794px;top:794px;color:#333">Revision Date</div>
<div class="a nw t12" style="left:22px;top:814px;color:#222">5/12/2016</div>
<div class="a nw t12" style="left:143px;top:814px;color:#222">Dietary - Diet</div>
<div class="a nw t12" style="left:329px;top:814px;color:#222">LCS, NAS diet, Mechanical Soft texture, Thin consistency</div>
<div class="a nw t12" style="left:655px;top:814px;color:#222">Active</div>
<div class="a nw t12" style="left:794px;top:814px;color:#222">5/12/2016</div>
<div class="a nw pht" style="left:962px;top:772px">Activities of Daily Living</div>
<svg class="a" style="left:1681px;top:774px" width="16" height="16" viewBox="0 0 16 16"><circle cx="8" cy="8" r="7.5" fill="none" stroke="#fffbd2" stroke-width="1"/><circle cx="8" cy="8" r="6.5" fill="#c9b98f" stroke="#4a3c20" stroke-width="1.1"/><circle cx="8" cy="8" r="4.9" fill="#f8f7f2"/><path d="M9.4 5.6L7.5 8.1L9.4 10.6" stroke="#1f2f30" stroke-width="1.5" fill="none"/><circle cx="8" cy="4" r="0.6" fill="#4a3c20"/><circle cx="4.3" cy="8.3" r="0.6" fill="#4a3c20"/></svg>
<div class="a nw pht" style="left:1701px;top:770px">Type: NC</div>
<div class="a" style="left:1759px;top:772px;width:17px;height:11px;background:#2e6da4;border-radius:2px;color:#fff;font-size:9px;line-height:11px;text-align:center">3.0</div>
<div class="a nw pht" style="left:1789px;top:770px">ARD: 5/17/2016</div>
<div class="a" style="left:956px;top:789px;width:916px;height:220px;background:#fff;overflow:hidden"><div class="a nw t12" style="left:3px;top:26px;color:#111">Bed mobility: self-performance</div><div class="a nw t12" style="left:775px;top:26px;width:100px;text-align:center;color:#111">6071CD2D-</div><div class="a g" style="left:0;top:43px;width:916px;height:19px"></div><div class="a nw t12" style="left:3px;top:45px;color:#111">Bed mobility: support provided</div><div class="a nw t12" style="left:775px;top:45px;width:100px;text-align:center;color:#111">BE6107BC-</div><div class="a nw t12" style="left:3px;top:64px;color:#111">Transfer: self-performance</div><div class="a nw t12" style="left:775px;top:64px;width:100px;text-align:center;color:#111">ABEDB047-</div><div class="a g" style="left:0;top:81px;width:916px;height:19px"></div><div class="a nw t12" style="left:3px;top:83px;color:#111">Transfer: support provided</div><div class="a nw t12" style="left:775px;top:83px;width:100px;text-align:center;color:#111">4CEAA5EC-</div><div class="a nw t12" style="left:3px;top:102px;color:#111">Walk in room: self-performance</div><div class="a nw t12" style="left:775px;top:102px;width:100px;text-align:center;color:#111">609B5220-</div><div class="a g" style="left:0;top:119px;width:916px;height:19px"></div><div class="a nw t12" style="left:3px;top:121px;color:#111">Walk in room: support provided</div><div class="a nw t12" style="left:775px;top:121px;width:100px;text-align:center;color:#111">C1181459-</div><div class="a nw t12" style="left:3px;top:140px;color:#111">Walk in corridor: self-performance</div><div class="a nw t12" style="left:775px;top:140px;width:100px;text-align:center;color:#111">E0EDFC0A-</div><div class="a g" style="left:0;top:157px;width:916px;height:19px"></div><div class="a nw t12" style="left:3px;top:159px;color:#111">Walk in corridor: support provided</div><div class="a nw t12" style="left:775px;top:159px;width:100px;text-align:center;color:#111">3126BF66-</div><div class="a nw t12" style="left:3px;top:178px;color:#111">Locomotion on unit: self-performance</div><div class="a nw t12" style="left:775px;top:178px;width:100px;text-align:center;color:#111">4B5C51D5-</div><div class="a g" style="left:0;top:195px;width:916px;height:19px"></div><div class="a nw t12" style="left:3px;top:197px;color:#111">Locomotion on unit: support provided</div><div class="a nw t12" style="left:775px;top:197px;width:100px;text-align:center;color:#111">3B430F74-</div><div class="a nw t12" style="left:3px;top:216px;color:#111">Locomotion off unit: self-performance</div><div class="a nw t12" style="left:775px;top:216px;width:100px;text-align:center;color:#111">E0931005-</div><div class="a th" style="left:0;top:0;width:916px;height:24px"></div><div class="a nw t12 b" style="left:2px;top:5px;color:#111">Activity</div><div class="a nw t12 b" style="left:808px;top:5px;color:#111">Value</div></div>
<div class="a" style="left:1873px;top:789px;width:15px;height:220px;background:#f1f1f1;"></div>
<div class="a" style="left:1874px;top:806px;width:13px;height:101px;background:#c1c1c1;"></div>
<svg class="a" style="left:1875px;top:794px" width="11" height="8" viewBox="0 0 11 8"><path d="M1.5 6.5L5.5 2.5L9.5 6.5z" fill="#a3a3a3"/></svg>
<svg class="a" style="left:1875px;top:996px" width="11" height="8" viewBox="0 0 11 8"><path d="M1.5 1.5L5.5 5.5L9.5 1.5z" fill="#505050"/></svg>
<div class="a" style="left:16px;top:789px;width:1px;height:227px;background:#98a57e;"></div>
<div class="a" style="left:17px;top:789px;width:1px;height:227px;background:#eef6e2;"></div>
<div class="a" style="left:951px;top:789px;width:1px;height:227px;background:#98a57e;"></div>
<div class="a" style="left:949px;top:789px;width:2px;height:227px;background:#eef6e2;"></div>
<div class="a" style="left:954px;top:789px;width:1px;height:220px;background:#98a57e;"></div>
<div class="a" style="left:955px;top:789px;width:1px;height:220px;background:#eef6e2;"></div>
<div class="a" style="left:1889px;top:789px;width:1px;height:221px;background:#98a57e;"></div>
<div class="a" style="left:954px;top:1009px;width:936px;height:1px;background:#98a57e;"></div>
</body></html>
